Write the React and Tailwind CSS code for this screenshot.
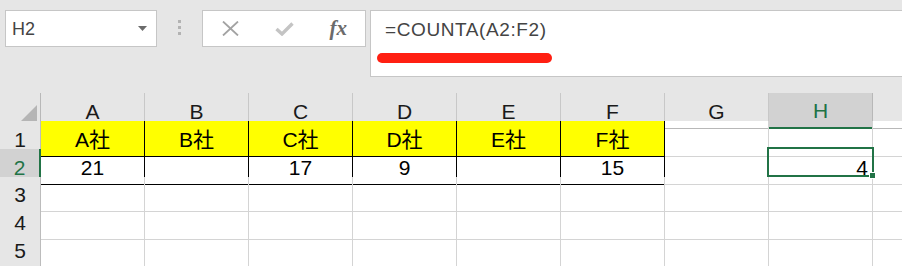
import React from 'react';

const cols = ['A', 'B', 'C', 'D', 'E', 'F', 'G', 'H'];
const row1 = ['A社', 'B社', 'C社', 'D社', 'E社', 'F社'];
const row2 = ['21', '', '17', '9', '', '15'];

const gridCols = 'grid grid-cols-[41px_repeat(8,104px)_1fr]';

const App = () => {
  return (
    <div className="w-[902px] h-[266px] overflow-hidden bg-white font-['Liberation_Sans','Noto_Sans_CJK_JP',sans-serif]">
      {/* ツールバー / 数式バー */}
      <div className="h-[93px] bg-[#e6e6e6] flex items-start pt-[10px]">
        {/* 名前ボックス */}
        <div className="ml-[5px] w-[152px] h-[37px] bg-white border border-[#c6c6c6] flex items-center justify-between pl-[6px] pr-[9px]">
          <span className="text-[18px] text-[#444] leading-none">H2</span>
          <svg width="9" height="5" viewBox="0 0 9 5">
            <path d="M0 0 L9 0 L4.5 5 Z" fill="#6b6b6b" />
          </svg>
        </div>

        {/* 区切りの点 */}
        <div className="w-[45px] flex flex-col items-center gap-[3px] pt-[10px]">
          <div className="w-[3px] h-[3px] bg-[#b3b3b3]" />
          <div className="w-[3px] h-[3px] bg-[#b3b3b3]" />
          <div className="w-[3px] h-[3px] bg-[#b3b3b3]" />
        </div>

        {/* キャンセル / 入力 / 関数 */}
        <div className="w-[164px] h-[37px] bg-white border border-[#c6c6c6] flex items-center pl-[1px]">
          <div className="w-[54px] flex justify-center">
            <svg width="17" height="15" viewBox="0 0 17 15">
              <path d="M1 0.5 L16 14.5 M16 0.5 L1 14.5" stroke="#a3a3a3" strokeWidth="1.8" fill="none" />
            </svg>
          </div>
          <div className="w-[54px] flex justify-center">
            <svg width="19" height="14" viewBox="0 0 19 14">
              <path d="M1.5 7 L7 12 L17.5 1.5" stroke="#c4c4c4" strokeWidth="3.4" fill="none" />
            </svg>
          </div>
          <div className="w-[54px] flex justify-center">
            <span className="font-['Liberation_Serif',serif] italic font-bold text-[21px] leading-none text-[#6b6b6b]">fx</span>
          </div>
        </div>

        {/* 数式 */}
        <div className="ml-[4px] flex-1 h-[67px] bg-white border border-r-0 border-[#c6c6c6] flex flex-col items-start">
          <div className="pl-[14px] pt-[7px] leading-[24px] text-[19px] tracking-[0.6px] text-[#444]">=COUNTA(A2:F2)</div>
          <div className="ml-[6px] mt-[11px] w-[175px] h-[10px] rounded-full bg-[#ff1f12]" />
        </div>
      </div>

      {/* 列見出し */}
      <div className={`${gridCols} h-[28px] bg-[#e6e6e6] text-[21px] text-[#1a1a1a]`}>
        <div className="border-r border-b border-[#b8b8b8] flex items-end justify-end pr-[3px] pb-[2px]">
          <svg width="21" height="21" viewBox="0 0 21 21">
            <path d="M21 0 L21 21 L0 21 Z" fill="#b5b5b5" />
          </svg>
        </div>
        {cols.map((c) =>
          c === 'H' ? (
            <div key={c} className="bg-[#d2d2d2] border-r border-[#b8b8b8] border-b-2 border-b-[#217346] flex items-center justify-center pt-[2px] text-[#217346]">
              {c}
            </div>
          ) : (
            <div key={c} className="border-r border-b border-[#c8c8c8] border-b-[#b8b8b8] flex items-center justify-center pt-[2px]">
              {c}
            </div>
          )
        )}
        <div className="border-b border-[#b8b8b8]" />
      </div>

      {/* 1行目 */}
      <div className={`${gridCols} h-[28px] text-[21px] text-black`}>
        <div className="bg-[#e6e6e6] border-r border-b border-[#bcbcbc] flex items-center justify-center pt-[2px] text-[#1a1a1a]">1</div>
        {row1.map((t) => (
          <div key={t} className="bg-[#ffff00] border-r border-b border-black flex items-center justify-center pt-[3px]">
            {t}
          </div>
        ))}
        <div className="border-r border-b border-[#d4d4d4]" />
        <div className="border-r border-b border-[#d4d4d4]" />
        <div className="border-b border-[#d4d4d4]" />
      </div>

      {/* 2行目 */}
      <div className={`${gridCols} h-[28px] text-[21px] text-black`}>
        <div className="bg-[#d2d2d2] border-b border-[#bcbcbc] border-r-2 border-r-[#217346] flex items-center justify-center pt-[2px] text-[#217346]">2</div>
        {row2.map((t, i) => (
          <div key={i} className="border-r border-b border-black flex items-center justify-center pt-[3px]">
            {t}
          </div>
        ))}
        <div className="border-r border-b border-[#d4d4d4]" />
        <div className="relative border-r border-b border-[#d4d4d4] flex items-center justify-end pr-[4px] pt-[3px]">
          4
          <div className="absolute left-[-2px] top-[-2px] w-[107px] h-[30px] border-2 border-[#217346]" />
          <div className="absolute left-[100px] top-[23px] w-[7px] h-[7px] bg-[#217346] border border-white" />
        </div>
        <div className="border-b border-[#d4d4d4]" />
      </div>

      {/* 3〜6行目 */}
      {['3', '4', '5', ''].map((r, i) => (
        <div key={i} className={`${gridCols} h-[28px] text-[21px]`}>
          <div className="bg-[#e6e6e6] border-r border-b border-[#bcbcbc] flex items-center justify-center pt-[2px] text-[#1a1a1a]">{r}</div>
          {cols.map((c) => (
            <div key={c} className="border-r border-b border-[#d4d4d4]" />
          ))}
          <div className="border-b border-[#d4d4d4]" />
        </div>
      ))}
    </div>
  );
};

export default App;
